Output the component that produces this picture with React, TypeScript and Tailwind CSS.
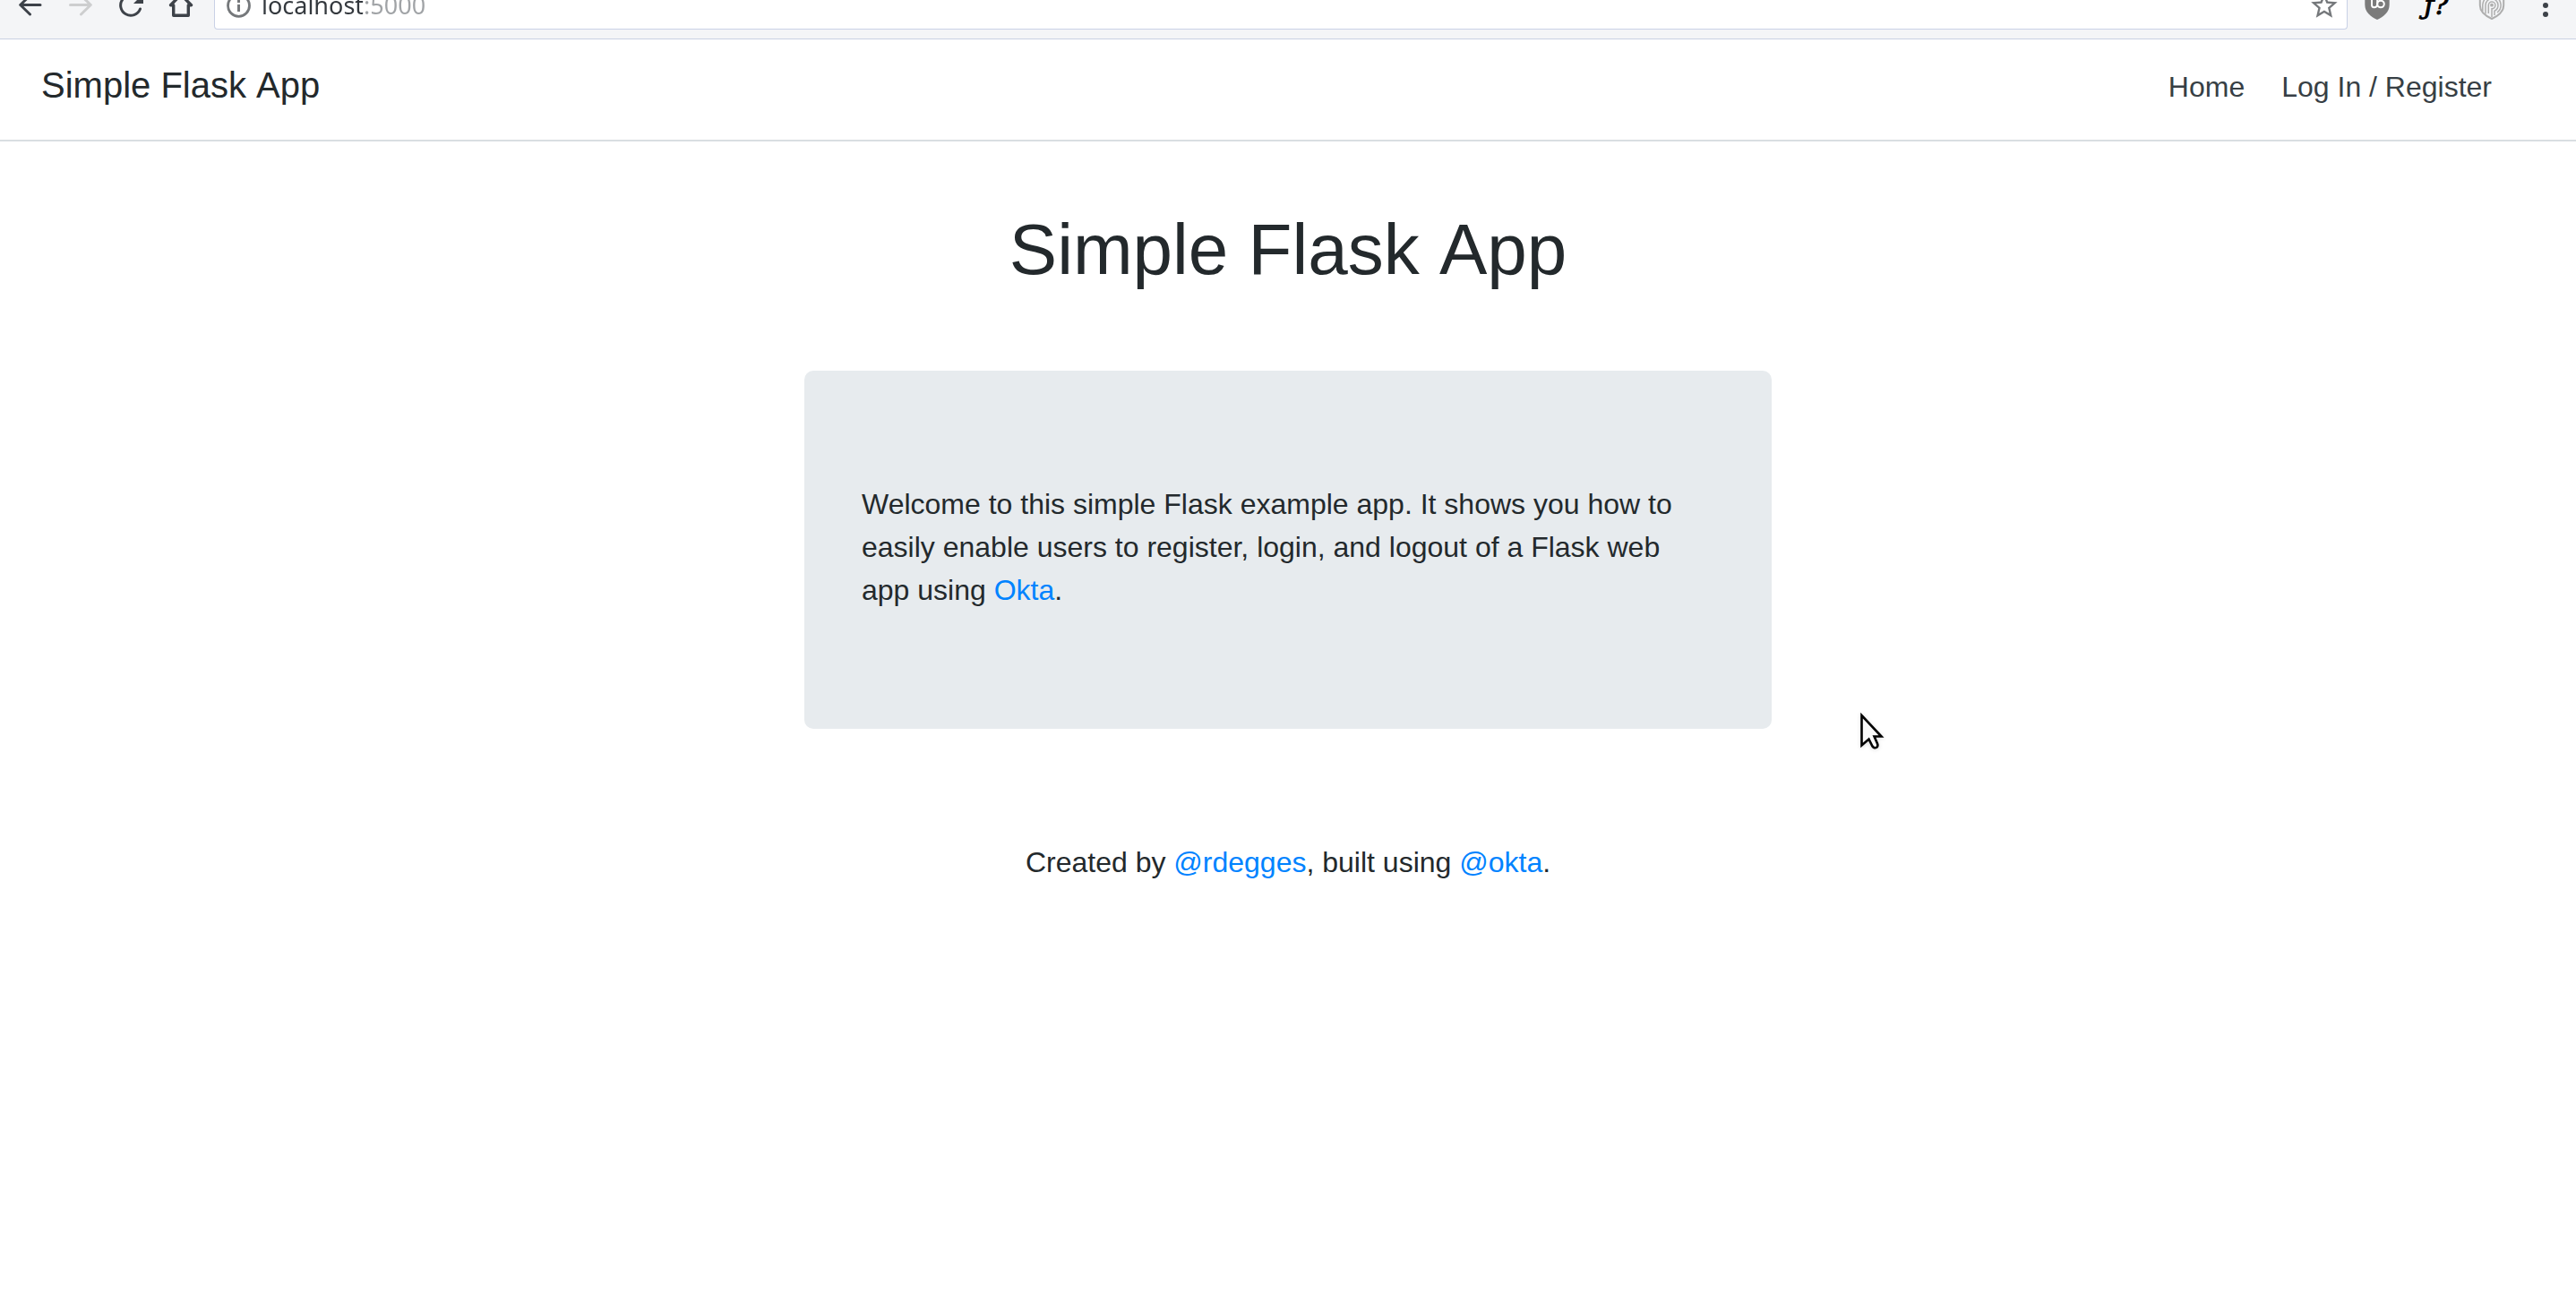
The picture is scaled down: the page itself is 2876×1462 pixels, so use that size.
import React from "react";

function BackIcon() {
  return (
    <svg width="32" height="44" viewBox="18 0 32 44" fill="none" stroke="#3d4249" strokeWidth="3" strokeLinecap="round" strokeLinejoin="round" aria-hidden="true">
      <path d="M45 5.5H23M33.5 16L22.7 5.5L33.5 -5" />
    </svg>
  );
}

function ForwardIcon() {
  return (
    <svg width="32" height="44" viewBox="74 0 32 44" fill="none" stroke="#cdcecf" strokeWidth="3" strokeLinecap="round" strokeLinejoin="round" aria-hidden="true">
      <path d="M78.500 5.500H101M90.500 16L101.300 5.500L90.500 -5" />
    </svg>
  );
}

function ReloadIcon() {
  return (
    <svg width="32" height="44" viewBox="130 0 32 44" fill="none" aria-hidden="true">
      <path d="M156.500 10A11.300 11.300 0 1 1 154 -2" stroke="#3d4249" strokeWidth="3" strokeLinecap="round" />
      <path d="M149 4H160V-7Z" fill="#3d4249" />
    </svg>
  );
}

function HomeIcon() {
  return (
    <svg width="32" height="44" viewBox="186 0 32 44" fill="none" stroke="#3d4249" strokeWidth="3.4" strokeLinejoin="round" aria-hidden="true">
      <path d="M190.500 5.700L202 -6L213.500 5.700H210.300V17.200H193.700V5.700Z" />
    </svg>
  );
}

function InfoIcon() {
  return (
    <svg width="32" height="44" viewBox="250 0 32 44" fill="none" aria-hidden="true">
      <circle cx="266.500" cy="6.300" r="12" stroke="#75787b" strokeWidth="2.800" />
      <path d="M265 0H268V3H265ZM265 5H268V13H265Z" fill="#75787b" />
    </svg>
  );
}

function StarIcon() {
  return (
    <svg width="32" height="32" viewBox="2579 0 32 32" aria-hidden="true">
      <path
        transform="translate(2576.2 -11.3) scale(1.475)"
        fill="#75787b"
        d="M22 9.240l-7.190-.62L12 2 9.190 8.630 2 9.240l5.460 4.730L5.820 21 12 17.270 18.180 21l-1.630-7.030L22 9.240zM12 15.400l-3.760 2.270 1-4.280-3.320-2.880 4.380-.38L12 6.100l1.710 4.040 4.380.38-3.320 2.880 1 4.280L12 15.400z"
      />
    </svg>
  );
}

function BlockerIcon() {
  return (
    <svg width="32" height="44" viewBox="2638 0 32 44" fill="none" aria-hidden="true">
      <path d="M2640.300 -4H2667.700V5C2667.700 14 2661 18.500 2654 22C2647 18.500 2640.300 14 2640.300 5Z" fill="#7b7b7b" />
      <path d="M2648 -3V5.500Q2648 8.200 2650.500 8.200Q2654.200 8.200 2654.200 4.500V-3" stroke="#fff" strokeWidth="2" />
      <circle cx="2658" cy="4.500" r="3.800" stroke="#fff" strokeWidth="2" />
    </svg>
  );
}

function FingerprintIcon() {
  return (
    <svg width="32" height="44" viewBox="2766 0 32 44" fill="none" stroke="#aeaeae" strokeWidth="1.500" aria-hidden="true">
      <path d="M2768.800 -3V6C2768.800 13.500 2775.500 18 2782 21C2788.500 18 2795.200 13.500 2795.200 6V-3" strokeWidth="2" />
      <circle cx="2782" cy="5.700" r="1.900" fill="#aeaeae" stroke="none" />
      <path d="M2778.300 15V5.700A3.800 3.800 0 1 1 2782 9.700V19" />
      <path d="M2775 15.500V5.700A7 7 0 0 1 2789 5.700A7 7 0 0 1 2785 12.200V17" />
      <path d="M2771.800 12.500V5A10.200 10.200 0 0 1 2778 -3.500M2786 -3.500A10.200 10.200 0 0 1 2788 14" />
    </svg>
  );
}

function MenuIcon() {
  return (
    <svg width="32" height="44" viewBox="2826 0 32 44" fill="#3d4249" aria-hidden="true">
      <circle cx="2842" cy="-4" r="3" />
      <circle cx="2842" cy="6" r="3" />
      <circle cx="2842" cy="16" r="3" />
    </svg>
  );
}

function BrowserBar() {
  return (
    <div className="flex h-11 items-start overflow-hidden border-b border-[#c9d1e3] bg-[#f4f5f7]">
      <div className="flex gap-6 pl-[18px]">
        <button type="button" aria-label="Back"><BackIcon /></button>
        <button type="button" aria-label="Forward" disabled><ForwardIcon /></button>
        <button type="button" aria-label="Reload"><ReloadIcon /></button>
        <button type="button" aria-label="Home page"><HomeIcon /></button>
      </div>
      <div className="ml-[21px] flex h-[33px] flex-1 items-end overflow-hidden rounded-b border border-t-0 border-[#c9d1e6] bg-white pr-2 pl-[10px]">
        <span className="self-start"><InfoIcon /></span>
        <input
          type="text"
          aria-label="Address"
          defaultValue="localhost:5000"
          className="ml-[10px] h-12 flex-1 bg-[linear-gradient(90deg,#33383d_113px,#a0a3a6_113px)] bg-clip-text pb-[6px] font-['Noto_Sans',sans-serif] text-[27px] text-transparent outline-none"
        />
        <button type="button" aria-label="Bookmark this page" className="self-start"><StarIcon /></button>
      </div>
      <div className="flex pr-[18px] pl-[17px]">
        <button type="button" aria-label="Content blocker"><BlockerIcon /></button>
        <button type="button" aria-label="Font finder" className="ml-8 flex h-11 w-8 items-start justify-center pl-1 font-['DejaVu_Serif',serif] text-[30px] leading-[12px] text-black italic [-webkit-text-stroke:1px_black]">
          ƒ?
        </button>
        <button type="button" aria-label="Fingerprint shield" className="ml-8"><FingerprintIcon /></button>
        <button type="button" aria-label="Browser menu" className="ml-7"><MenuIcon /></button>
      </div>
    </div>
  );
}

function SiteHeader() {
  return (
    <header className="flex items-start justify-between border-b-2 border-[#d9dee2] pt-7 pr-[94px] pb-[34px] pl-[46px]">
      <p className="text-[40px] leading-[46px] [font-kerning:none]">Simple Flask App</p>
      <nav className="flex gap-[41px] text-[32px] leading-[50px] text-[#373f45]">
        <a href="#home">Home</a>
        <a href="#login">Log In / Register</a>
      </nav>
    </header>
  );
}

function Pointer() {
  return (
    <svg className="pointer-events-none absolute top-[794px] left-[2074px] drop-shadow-sm" width="32" height="46" viewBox="0 0 32 46" aria-hidden="true">
      <path d="M4.500 5V38.500L12.500 31.500L16.500 39.500Q18.500 42.500 21.500 40.500Q23 39 22 36.500L18.500 28.500H26.500Z" fill="#f8f8f8" stroke="#000" strokeWidth="2.600" />
    </svg>
  );
}

export default function App() {
  return (
    <div className="relative min-h-screen overflow-hidden bg-white font-['Liberation_Sans',Arial,sans-serif] text-[#23292c]">
      <BrowserBar />
      <SiteHeader />
      <main className="mx-auto max-w-[1080px]">
        <h1 className="pt-[73px] pb-[87px] text-center text-[80px] leading-[96px] [font-kerning:none]">Simple Flask App</h1>
        <section className="rounded-[10px] bg-[#e7ebee] px-16 pt-[125px] pb-[131px]">
          <p className="text-[32px] leading-[48px]">
            Welcome to this simple Flask example app. It shows you how to easily enable users to register, login, and logout of a Flask web app using{" "}
            <a href="#okta" className="text-[#0083ff]">Okta</a>.
          </p>
        </section>
      </main>
      <footer className="pt-[125px] text-center text-[32px] leading-[48px]">
        Created by <a href="#rdegges" className="text-[#0083ff]">@rdegges</a>, built using{" "}
        <a href="#okta-team" className="text-[#0083ff]">@okta</a>.
      </footer>
      <Pointer />
    </div>
  );
}
